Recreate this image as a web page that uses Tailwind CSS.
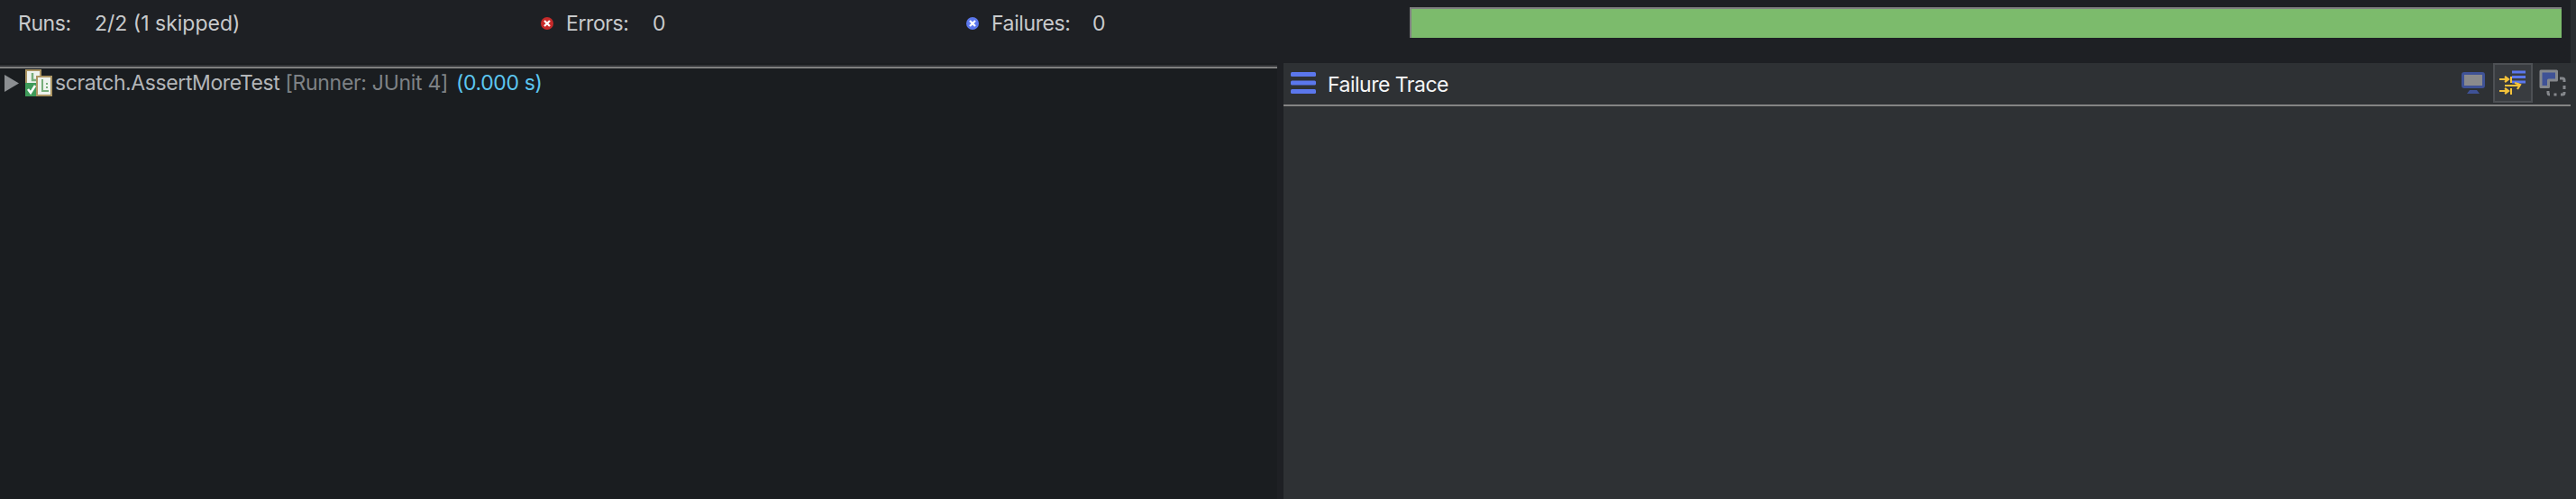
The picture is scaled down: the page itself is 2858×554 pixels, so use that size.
<!doctype html>
<html>
<head>
<meta charset="utf-8">
<script src="https://cdn.jsdelivr.net/npm/@tailwindcss/browser@4"></script>
</head>
<body class="m-0 bg-[#1e2024] overflow-hidden">
<div class="w-[2858px] h-[554px] flex flex-col font-['Inter','Liberation_Sans',sans-serif] text-[23px] tracking-[-0.4px] text-[#c8cacc] bg-[#1e2024]">
  <div class="h-[70px] shrink-0 flex">
    <div class="w-[2852px] flex h-[70px]">
      <div class="w-[590px] pl-[20px] pt-[12px] leading-[28px] flex">
        <span class="w-[85px]">Runs:</span><span class="tracking-[0px]">2/2 (1 skipped)</span>
      </div>
      <div class="w-[474px] pl-[10px] pt-[12px] leading-[28px] flex">
        <svg class="w-[14px] h-[14px] mt-[7px] mr-[14px]" viewBox="0 0 14 14"><circle cx="7" cy="7" r="7" fill="#c62a2a"/><path d="M4 4l6 6M10 4l-6 6" stroke="#fff" stroke-width="2.300"/></svg>
        <span class="w-[96px]">Errors:</span><span>0</span>
      </div>
      <div class="w-[500px] pl-[8px] pt-[12px] leading-[28px] flex">
        <svg class="w-[14px] h-[14px] mt-[7px] mr-[14px]" viewBox="0 0 14 14"><circle cx="7" cy="7" r="7" fill="#5b77ec"/><path d="M4 4l6 6M10 4l-6 6" stroke="#fff" stroke-width="2.300"/></svg>
        <span class="w-[112px]">Failures:</span><span>0</span>
      </div>
      <div class="w-[1278px] h-[34px] mt-[8px] border-t-2 border-l-2 border-[#808080] bg-[#7cbb6c]"></div>
    </div>
    <div class="w-[6px] bg-[#2a2d30]"></div>
  </div>
  <div class="flex-1 flex min-h-0">
    <div class="w-[1417px] mr-[7px] bg-[#1a1d20] flex flex-col">
      <div class="h-[2px] mt-[2px] bg-[#303235] shrink-0"></div>
      <div class="h-[2px] bg-[#7f7f7f] shrink-0"></div>
      <div class="flex items-center h-[30px] mt-[1px] pl-[5px]">
        <svg class="w-[16px] h-[19px] shrink-0" viewBox="0 0 16 19"><path d="M0 0l16 9.500L0 19z" fill="#8c8f92"/></svg>
        <svg class="w-[30px] h-[30px] ml-[7px] shrink-0" viewBox="0 0 30 30">
          <rect x="1" y="1" width="16" height="20" fill="#eef3ee" stroke="#ab9563" stroke-width="2"/>
          <path d="M8 4v8h5" stroke="#77ae7b" stroke-width="2.500" fill="none"/>
          <rect x="0" y="15" width="14" height="15" fill="#3f9b5a"/>
          <path d="M3 22l3 4 5-8" stroke="#fff" stroke-width="2.500" fill="none"/>
          <rect x="13" y="8" width="16" height="21" fill="#eef3ee" stroke="#ab9563" stroke-width="2"/>
          <path d="M19 11v13h7M24 15v2M24 19v2" stroke="#77ae7b" stroke-width="2" fill="none"/>
        </svg>
        <span class="ml-[3px] text-[#b3b6b9] whitespace-nowrap">scratch.AssertMoreTest</span>
        <span class="ml-[6px] tracking-[-0.3px] text-[#7e8286] whitespace-nowrap">[Runner: JUnit 4]</span>
        <span class="ml-[9px] text-[#5cc6f0] whitespace-nowrap">(0.000 s)</span>
      </div>
    </div>
    <div class="flex-1 flex flex-col bg-[#2e3134]">
      <div class="h-[46px] shrink-0 flex items-start pl-[8px] mr-[6px]">
        <svg class="w-[28px] h-[24px] mt-[10px] shrink-0" viewBox="0 0 28 24"><rect x="0" y="0" width="28" height="5" rx="1.500" fill="#5b77ec"/><rect x="0" y="9.500" width="28" height="5" rx="1.500" fill="#5b77ec"/><rect x="0" y="19" width="28" height="5" rx="1.500" fill="#5b77ec"/></svg>
        <span class="ml-[13px] mt-[10px] leading-[28px] tracking-[-0.5px] text-[#f4f5f6]">Failure Trace</span>
        <div class="ml-auto flex items-start pr-[5px]">
          <svg class="w-[26px] h-[24px] mt-[10px]" viewBox="0 0 26 24"><rect x="1.500" y="1.500" width="23" height="15" rx="1.500" fill="#8a8a8c" stroke="#3f5296" stroke-width="3"/><path d="M13 17v3M6 24l3-4h8l3 4z" fill="#3f5296"/></svg>
          <svg class="w-[44px] h-[44px] ml-[9px]" viewBox="0 0 44 44">
            <rect x="1" y="1" width="42" height="42" fill="#393c40" stroke="#4d5054" stroke-width="2"/>
            <path d="M21 10h15M21 15.500h15M21 21h15" stroke="#5b77ec" stroke-width="3"/>
            <path d="M7 18h10M13 15l4 3-4 3M7 31h10M13 28l4 3-4 3M13 25h16M24 22l6 2-3 5" stroke="#f4c23a" stroke-width="2.200" fill="none"/>
            <path d="M20 15v7M20 28v7" stroke="#f4c23a" stroke-width="2"/>
          </svg>
          <svg class="w-[30px] h-[30px] mt-[7px] ml-[7px]" viewBox="0 0 30 30" fill="none">
            <path d="M2 2H19.500V12H10.500V19.500H2Z" fill="#3f5296" stroke="#85888c" stroke-width="3" stroke-linejoin="round"/>
            <path d="M23 10h3a2 2 0 0 1 2 2v2M28 18v4M28 25v1a2 2 0 0 1-2 2h-2M19.500 28h-3M12 28a2 2 0 0 1-2-2v-2" stroke="#85888c" stroke-width="3"/>
          </svg>
        </div>
      </div>
      <div class="h-[2px] mr-[6px] bg-[#848484] shrink-0"></div>
    </div>
  </div>
</div>
</body>
</html>
